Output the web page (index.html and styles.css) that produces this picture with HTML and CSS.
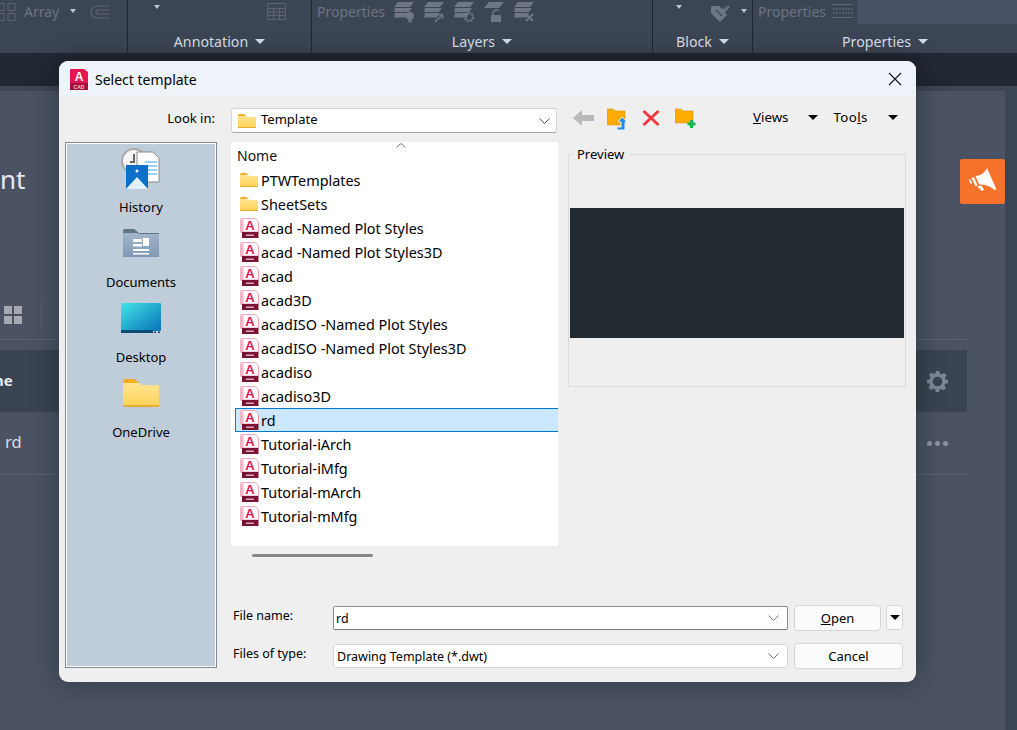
FILE: index.html
```html
<!DOCTYPE html>
<html lang="en">
<head>
<meta charset="utf-8">
<title>Select template</title>
<link rel="stylesheet" href="styles.css">
</head>
<body>
<svg class="defs" width="0" height="0" aria-hidden="true">
  <defs>
    <linearGradient id="fold" x1="0" y1="0" x2="0" y2="1"><stop offset="0" stop-color="#ffe48f"/><stop offset="1" stop-color="#ffd257"/></linearGradient>
    <linearGradient id="teal" x1="0" y1="0" x2="1" y2="1"><stop offset="0" stop-color="#45e3e6"/><stop offset="1" stop-color="#0572b8"/></linearGradient>
    <linearGradient id="docf" x1="0" y1="0" x2="0" y2="1"><stop offset="0" stop-color="#a3b7cb"/><stop offset="1" stop-color="#7f98b4"/></linearGradient>
    <symbol id="folder" viewBox="0 0 18 14">
      <path d="M0 1.500Q0 0 1.500 0H6L8 2H0Z" fill="#f2b01e"/>
      <path d="M0 2H8L9.500 3H18V13Q18 14 17 14H1Q0 14 0 13Z" fill="url(#fold)"/>
      <path d="M0 13H18V13.400Q18 14 17 14H1Q0 14 0 13.400Z" fill="#e7ac2f"/>
    </symbol>
    <symbol id="dwt" viewBox="0 0 20 20">
      <path d="M0.500 1.500Q0.500 0.500 1.500 0.500H15L18.500 4V14H0.500Z" fill="#fff" stroke="#f0a3ba"/>
      <path d="M0.500 1.500H3.500V15H0.500Z" fill="#f7b8cb"/>
      <text x="10" y="12" class="dwt-a">A</text>
      <rect x="2" y="14" width="16.500" height="6" fill="#7c1234"/>
      <rect x="6" y="16.500" width="8" height="1.500" fill="#d9a8b8"/>
    </symbol>
    <symbol id="layer" viewBox="0 0 22 22">
      <path d="M5 1H21L17 6H1ZM2 7H19L16 11H1ZM2 12H16L14 16.500H1Z" fill="#6f7784"/>
    </symbol>
  </defs>
</svg>

<div class="app">
  <header class="ribbon">
    <section class="rpanel rp0">
      <div class="rtop">
        <svg class="ic-array" width="17" height="18" viewBox="0 0 17 18"><path d="M-4 .5h8v7h-8zM8 .5h7v7H8zM-4 10.500h8v7h-8zM8 10.500h7v7H8z" fill="none" stroke="#5d6573"/></svg>
        <span class="dim">Array</span>
        <i class="tri tri-dim"></i>
        <svg class="ic-off" width="21" height="14" viewBox="0 0 21 14"><path d="M20 1H7A6 6 0 0 0 7 13H20M20 5H8A2 2 0 0 0 8 9H20" fill="none" stroke="#5d6573" stroke-width="1.200"/></svg>
      </div>
      <div class="rlabel"></div>
    </section>
    <section class="rpanel rp1">
      <div class="rtop">
        <i class="tri tri-dim tri-a"></i>
        <svg class="ic-table" width="19" height="17" viewBox="0 0 19 17"><path d="M.5.500h18v16H.5zM.5 5.500h18M.5 9h18M.5 12.500h18M6.500 5.500v11M12.500 5.500v11" fill="#3e4756" stroke="#5d6573"/></svg>
      </div>
      <div class="rlabel">Annotation <i class="tri"></i></div>
    </section>
    <section class="rpanel rp2">
      <div class="rtop">
        <span class="dim">Properties</span>
        <span class="layers">
          <svg width="22" height="22"><use href="#layer"/><circle cx="17" cy="15" r="4" fill="#6f7784"/><rect x="15.500" y="19" width="3" height="2.500" fill="#6f7784"/></svg>
          <svg width="22" height="22"><use href="#layer"/><path d="M12 21l7-7M15 13.500h4.500v4.500" stroke="#6f7784" stroke-width="1.500" fill="none"/></svg>
          <svg width="22" height="22"><use href="#layer"/><circle cx="16" cy="16" r="4" fill="none" stroke="#6f7784" stroke-width="2.500" stroke-dasharray="2 1"/></svg>
          <svg width="22" height="22"><path d="M6 1H21L16 7H1Z" fill="#6f7784"/><rect x="8" y="14" width="10" height="7" fill="#6f7784"/><path d="M10 14V11Q13 7 16 10" fill="none" stroke="#6f7784" stroke-width="1.500"/></svg>
          <svg width="22" height="22"><use href="#layer"/><path d="M13 13l7 7M20 13l-7 7" stroke="#6f7784" stroke-width="2"/></svg>
        </span>
      </div>
      <div class="rlabel">Layers <i class="tri"></i></div>
    </section>
    <section class="rpanel rp3">
      <div class="rtop">
        <i class="tri tri-dim tri-b"></i>
        <svg class="ic-tag" width="21" height="21" viewBox="0 0 21 21"><path d="M0 4H8L11 7 16 3 19 5 14 10 16 13 9 20 0 11Z" fill="#6f7784"/><path d="M5 8l6 6M13 7l6-6" stroke="#3d4655" stroke-width="1.200"/></svg>
        <i class="tri tri-dim tri-c"></i>
      </div>
      <div class="rlabel">Block <i class="tri"></i></div>
    </section>
    <section class="rpanel rp4">
      <div class="rtop">
        <span class="dim">Properties</span>
        <svg class="ic-lines" width="20" height="16" viewBox="0 0 20 16"><path d="M0 1.500h20M0 6h20M0 10h20M0 14.500h20" stroke="#6f7784" stroke-dasharray="2 1"/></svg>
        <span class="rinput"></span>
      </div>
      <div class="rlabel">Properties <i class="tri"></i></div>
    </section>
  </header>
  <div class="strip"></div>

  <main class="work">
    <div class="panel">
      <h1 class="ptitle">nt</h1>
      <div class="ptools">
        <span class="tiles"><i></i><i></i><i></i><i></i></span>
        <span class="vsep"></span>
      </div>
      <div class="thead">
        <b>ne</b>
        <svg class="gear" width="21" height="21" viewBox="0 0 24 24"><path fill="#7d8894" fill-rule="evenodd" d="M10 0h4l.6 3.200 2.200.9 2.700-1.800 2.800 2.800-1.800 2.700.9 2.200L24 10v4l-3.200.6-.9 2.200 1.800 2.700-2.800 2.800-2.700-1.800-2.200.9L14 24h-4l-.6-3.200-2.200-.9-2.700 1.800-2.800-2.800 1.800-2.700-.9-2.200L0 14v-4l3.200-.6.9-2.200-1.800-2.700 2.800-2.800 2.700 1.800 2.200-.9zM12 6.500a5.500 5.500 0 1 0 0 11 5.500 5.500 0 0 0 0-11z"/></svg>
      </div>
      <div class="trow">
        <span>rd</span>
        <span class="dots"><i></i><i></i><i></i></span>
      </div>
    </div>
    <button class="promo" type="button" aria-label="Announcements">
      <svg width="32" height="27" viewBox="0 0 32 27"><path d="M20 0 L29.500 21.500 L27.500 22 Q21 16 12 16.500L8.500 8Q17 7 20 0ZM7 9 L10.500 17.500 L8.500 18.200 L4.500 10ZM2 11.500L3.500 11 5 15.500 3.500 16ZM10 18.500L14.500 17.500 17 21.500 15 23Z" fill="#fff"/></svg>
    </button>
  </main>

  <section class="dialog" aria-label="Select template">
    <div class="dtitle">
      <svg class="logo" width="19" height="21" viewBox="0 0 19 21"><path d="M1 1Q1 0 2 0H15L19 3V15H1Z" fill="#e5154f"/><rect x="1" y="14" width="18" height="7" fill="#a2113c"/><text x="10" y="12" class="logo-a">A</text><text x="10" y="19.500" class="logo-c">CAD</text></svg>
      <span class="dname">Select template</span>
      <svg class="close" width="14" height="14" viewBox="0 0 14 14"><path d="M1 1l12 12M13 1L1 13" stroke="#111" stroke-width="1.100" fill="none"/></svg>
    </div>
    <div class="dbody">
      <div class="lookrow">
        <label class="looklabel">Look in:</label>
        <div class="combo lookcombo">
          <svg width="18" height="14"><use href="#folder"/></svg>
          <span class="looktext">Template</span>
          <svg class="chev" width="11" height="6" viewBox="0 0 11 6"><path d="M.5.500l5 5 5-5" fill="none" stroke="#555"/></svg>
        </div>
        <div class="tbicons">
          <svg width="22" height="16" viewBox="0 0 22 16"><path d="M0 8L9 0V5H21V11H9V16Z" fill="#b9b9b9"/></svg>
          <svg class="ti-up" width="22" height="22" viewBox="0 0 22 22"><path d="M0 1H6L8 3H18V17H0Z" fill="#ffab00" stroke="#d9950b" stroke-width=".6"/><path d="M15 9L20 14H18V22H10V19H14V14H11Z" fill="#1e90e8" stroke="#efefef"/></svg>
          <svg class="ti-x" width="18" height="16" viewBox="0 0 18 16"><path d="M1.500 1L16.500 15M16.500 1L1.500 15" stroke="#f4363f" stroke-width="2.800"/></svg>
          <svg class="ti-new" width="22" height="20" viewBox="0 0 22 20"><path d="M0 1H6L8 3H18V15H0Z" fill="#ffab00" stroke="#d9950b" stroke-width=".6"/><path d="M15 12H18V14.500H20.500V17.500H18V20H15V17.500H12.500V14.500H15Z" fill="#1fb151"/></svg>
        </div>
        <span class="menu menu-views"><u>V</u>iews</span><i class="tri tri-k"></i>
        <span class="menu menu-tools">Too<u>l</u>s</span><i class="tri tri-k"></i>
      </div>

      <div class="mainrow">
        <nav class="places">
          <a class="place">
            <span class="pic">
              <svg width="40" height="41" viewBox="0 0 40 41">
                <circle cx="13" cy="13" r="12" fill="#f4f4f4" stroke="#a8a8a8" stroke-width="2"/>
                <path d="M13 6v8h-4" fill="none" stroke="#666" stroke-width="2"/>
                <path d="M16 4H32L38 10V34H16Z" fill="#fff" stroke="#8a8a8a"/>
                <path d="M24 14H36M24 18H36M26 22H36M26 26H36" stroke="#2ea7e6"/>
                <path d="M5 17H27V41H5Z" fill="#0a70c9"/>
                <path d="M5 41L16 29 27 41Z" fill="#e5f1fa"/>
                <circle cx="16" cy="23" r="1.500" fill="#fff"/>
              </svg>
            </span>
            <span>History</span>
          </a>
          <a class="place">
            <span class="pic">
              <svg width="36" height="28" viewBox="0 0 36 28">
                <path d="M0 2Q0 0 2 0H11L16 4H36V28H0Z" fill="#5f7586"/>
                <path d="M0 4H14L17 5H36V27Q36 28 35 28H1Q0 28 0 27Z" fill="url(#docf)"/>
                <path d="M10 10H19V13H10ZM10 15H19V17.500H10ZM10 20H26V22H10ZM10 24H26V25.500H10Z" fill="#fff"/>
                <rect x="20" y="9" width="6" height="8" fill="#fff"/>
              </svg>
            </span>
            <span>Documents</span>
          </a>
          <a class="place">
            <span class="pic">
              <svg width="40" height="30" viewBox="0 0 40 30">
                <rect width="40" height="28" rx="1" fill="url(#teal)"/>
                <rect y="27" width="32" height="3" fill="#0b4a72"/>
                <path d="M33 28.500h2v1.500h-2zM37 28.500h2v1.500h-2z" fill="#0b4a72"/>
              </svg>
            </span>
            <span>Desktop</span>
          </a>
          <a class="place">
            <span class="pic">
              <svg width="36" height="28"><use href="#folder"/></svg>
            </span>
            <span>OneDrive</span>
          </a>
        </nav>

        <div class="center">
          <div class="upper">
            <div class="listcol">
              <div class="list">
                <div class="lhead">Nome
                  <svg class="caret" width="10" height="5" viewBox="0 0 10 5"><path d="M.5 4.500L5 .5l4.500 4" fill="none" stroke="#777"/></svg>
                </div>
                <div class="row"><svg width="18" height="14"><use href="#folder"/></svg><span>PTWTemplates</span></div>
                <div class="row"><svg width="18" height="14"><use href="#folder"/></svg><span>SheetSets</span></div>
                <div class="row"><svg width="20" height="20"><use href="#dwt"/></svg><span>acad -Named Plot Styles</span></div>
                <div class="row"><svg width="20" height="20"><use href="#dwt"/></svg><span>acad -Named Plot Styles3D</span></div>
                <div class="row"><svg width="20" height="20"><use href="#dwt"/></svg><span>acad</span></div>
                <div class="row"><svg width="20" height="20"><use href="#dwt"/></svg><span>acad3D</span></div>
                <div class="row"><svg width="20" height="20"><use href="#dwt"/></svg><span>acadISO -Named Plot Styles</span></div>
                <div class="row"><svg width="20" height="20"><use href="#dwt"/></svg><span>acadISO -Named Plot Styles3D</span></div>
                <div class="row"><svg width="20" height="20"><use href="#dwt"/></svg><span>acadiso</span></div>
                <div class="row"><svg width="20" height="20"><use href="#dwt"/></svg><span>acadiso3D</span></div>
                <div class="row sel"><svg width="20" height="20"><use href="#dwt"/></svg><span>rd</span></div>
                <div class="row"><svg width="20" height="20"><use href="#dwt"/></svg><span>Tutorial-iArch</span></div>
                <div class="row"><svg width="20" height="20"><use href="#dwt"/></svg><span>Tutorial-iMfg</span></div>
                <div class="row"><svg width="20" height="20"><use href="#dwt"/></svg><span>Tutorial-mArch</span></div>
                <div class="row"><svg width="20" height="20"><use href="#dwt"/></svg><span>Tutorial-mMfg</span></div>
              </div>
              <div class="hscroll"></div>
            </div>
            <fieldset class="preview">
              <legend>Preview</legend>
              <div class="pvimg"></div>
            </fieldset>
          </div>
          <div class="fields">
            <label>File name:</label>
            <div class="combo input active"><span>rd</span><svg class="chev" width="11" height="6" viewBox="0 0 11 6"><path d="M.5.500l5 5 5-5" fill="none" stroke="#777"/></svg></div>
            <div class="btnpair">
              <button class="btn open" type="button"><u>O</u>pen</button>
              <button class="btn drop" type="button"><i class="tri tri-k"></i></button>
            </div>
            <label>Files of type:</label>
            <div class="combo input"><span>Drawing Template (*.dwt)</span><svg class="chev" width="11" height="6" viewBox="0 0 11 6"><path d="M.5.500l5 5 5-5" fill="none" stroke="#777"/></svg></div>
            <button class="btn" type="button">Cancel</button>
          </div>
        </div>
      </div>
    </div>
  </section>
</div>
</body>
</html>
```
FILE: styles.css
```css
* { box-sizing: border-box; }
html, body { margin: 0; height: 100%; }
body { font-family: "Noto Sans", "Open Sans", sans-serif; background: #3c4554; overflow: hidden; }
.defs { position: absolute; }
i { display: inline-block; font-style: normal; }

.app { position: relative; width: 1017px; height: 730px; display: flex; flex-direction: column; overflow: hidden; }

/* ribbon */
.ribbon { display: flex; height: 53px; background: #3c4554; flex: none; }
.rpanel { display: flex; flex-direction: column; border-left: 1px solid #20262f; height: 52px; }
.rp0 { width: 127px; border-left: 0; }
.rp1 { width: 184px; }
.rp2 { width: 341px; }
.rp3 { width: 100px; }
.rp4 { width: 265px; }
.rtop { height: 31px; display: flex; align-items: flex-start; }
.rlabel { flex: 1; display: flex; align-items: center; justify-content: center; gap: 7px; color: #d8dfe8; font-size: 14.200px; }
.dim { color: #6c7482; font-size: 14px; line-height: 23px; }
.tri { width: 0; height: 0; border-left: 5px solid transparent; border-right: 5px solid transparent; border-top: 5px solid #d5dbe3; flex: none; }
.tri-dim { border-left-width: 3.500px; border-right-width: 3.500px; border-top-width: 4px; border-top-color: #c0c6cf; }
.tri-k { border-left-width: 5px; border-right-width: 5px; border-top: 5px solid #000; }
.ic-array { margin: 3px 7px 0 0; }
.rp0 .tri { margin: 9px 0 0 11px; }
.ic-off { margin: 5px 0 0 14px; }
.rp1 .tri-a { margin: 5px 0 0 26px; }
.ic-table { margin: 3px 0 0 107px; }
.rp2 .dim { margin-left: 5px; }
.layers { display: flex; gap: 8px; margin: 0 0 0 8px; padding-top: 1px; }
.rp3 .tri-b { margin: 5px 0 0 23px; }
.ic-tag { margin: 2px 0 0 29px; }
.rp3 .tri-c { margin: 9px 0 0 9px; }
.rp4 .dim { margin-left: 5px; }
.ic-lines { margin: 3px 0 0 7px; }
.rinput { flex: 1; height: 24px; margin-left: 4px; background: #495366; }

.strip { height: 33px; background: #212832; flex: none; }

/* workspace */
.work { flex: 1; display: flex; align-items: flex-start; padding: 5px 12px 0 0; position: relative; }
.panel { flex: 1; height: 100%; background: #4a5263; padding-right: 38px; }
.ptitle { margin: 0; height: 209px; padding-top: 70px; font-size: 26px; line-height: 36px; font-weight: 400; color: #e6e9ee; }
.ptools { display: flex; align-items: center; height: 40px; border-bottom: 1px solid #5a6272; padding: 0 0 9px 4px; }
.tiles { display: grid; grid-template-columns: 8px 8px; gap: 2px; }
.tiles i { width: 8px; height: 8px; background: #a5a9b2; }
.vsep { width: 1px; height: 30px; background: #576072; margin-left: 19px; }
.thead { margin-top: 10px; height: 62px; background: #3a4351; display: flex; align-items: center; justify-content: space-between; padding: 0 19px 2px 0; color: #e9ecf0; font-size: 15px; }
.thead b { margin-left: -6px; }
.gear { display: block; margin-top: 2px; }
.trow { height: 63px; border-bottom: 1px solid #5a6272; display: flex; align-items: center; justify-content: space-between; padding: 0 19px 4px 5px; color: #d9dde3; font-size: 16.500px; }
.dots { display: flex; gap: 3px; margin-top: 5px; }
.dots i { width: 5px; height: 5px; border-radius: 50%; background: #8a95a1; }
.promo { position: absolute; left: 960px; top: 73px; width: 45px; height: 45px; padding: 0; border: 0; border-radius: 2px; background: #f6722a; display: flex; align-items: center; justify-content: center; }

/* dialog window */
.dialog { position: absolute; left: 59px; top: 61px; width: 857px; height: 621px; border-radius: 9px; background: #efefef; box-shadow: 0 0 28px rgba(0,0,0,.35); display: flex; flex-direction: column; overflow: hidden; color: #000; font-size: 13px; }
.dtitle { height: 36px; background: #eef3f9; display: flex; align-items: center; padding: 0 14px 0 10px; flex: none; }
.logo { display: block; }
.logo-a { font: 700 12px "Liberation Sans", sans-serif; fill: #fff; text-anchor: middle; }
.logo-c { font: 700 5px "Liberation Sans", sans-serif; fill: #f3c7d3; text-anchor: middle; }
.dwt-a { font: 700 13px "Liberation Sans", sans-serif; fill: #e5154f; text-anchor: middle; }
.dname { margin-left: 7px; font-size: 14px; flex: 1; }
.dbody { flex: 1; display: flex; flex-direction: column; padding: 0 13px 13px 6px; }

.lookrow { display: flex; align-items: flex-start; height: 45px; padding-top: 11px; flex: none; }
.looklabel { width: 166px; text-align: right; padding-right: 16px; line-height: 21px; }
.combo { display: flex; align-items: center; background: #fff; border: 1px solid #d5d5d5; border-radius: 3px; }
.lookcombo { width: 326px; height: 25px; padding: 0 6px; gap: 5px; border-bottom-color: #a8a8a8; }
.looktext { padding-bottom: 3px; }
.chev { margin-left: auto; flex: none; }
.tbicons { display: flex; align-items: flex-start; margin-left: 16px; width: 180px; }
.tbicons svg { flex: none; }
.tbicons > :first-child { margin-top: 2px; }
.ti-up { margin-left: 12px; }
.ti-x { margin: 2px 0 0 13px; }
.ti-new { margin-left: 15px; }
.menu { line-height: 19px; font-size: 13.300px; }
.menu-views { margin-left: 0; }
.menu + .tri { margin: 7px 0 0 20px; }
.menu-tools { margin-left: 15px; letter-spacing: .4px; }

.mainrow { flex: 1; display: flex; gap: 14px; min-height: 0; }
.places { width: 152px; margin-bottom: 1px; background: #bfccd9; border: 1px solid #7f8a94; box-shadow: inset 0 0 0 1px #fff; padding-top: 2px; text-align: center; flex: none; }
.place { height: 75px; display: flex; flex-direction: column; align-items: center; color: #000; }
.pic { height: 46px; display: flex; align-items: center; justify-content: center; margin-bottom: 6px; }
.place > span:last-child { line-height: 20px; }

.center { flex: 1; display: flex; flex-direction: column; min-width: 0; }
.upper { display: flex; gap: 10px; height: 463px; flex: none; }
.listcol { width: 327px; flex: none; display: flex; flex-direction: column; }
.list { height: 404px; background: #fff; position: relative; overflow: hidden; }
.lhead { height: 26px; padding-left: 6px; font-size: 14px; line-height: 27px; color: #111; }
.caret { position: absolute; left: 165px; top: 1px; }
.row { height: 24px; display: flex; align-items: center; gap: 1px; padding-left: 5px; margin-left: 4px; font-size: 14.400px; color: #000; white-space: nowrap; }
.row svg { flex: none; }
.row svg[height="14"] { margin-right: 2px; }
.row.sel { background: #cce8ff; border: 1px solid #0078d7; border-right: 0; padding-left: 4px; border-radius: 1px 0 0 1px; }
.hscroll { width: 121px; height: 3px; margin: 8px 0 0 21px; background: #888; border-radius: 2px; }

.preview { flex: none; margin: 3px 0 0; padding: 0 1px; width: 338px; height: 242px; border: 1px solid #dcdcdc; min-width: 0; }
.preview legend { margin-left: 2px; padding: 0 4px 0 5px; font-size: 13px; line-height: 18px; }
.pvimg { height: 130px; margin-top: 45px; background: #212931; }

.fields { display: grid; grid-template-columns: 102px 461px 109px; row-gap: 12px; column-gap: 0; align-items: center; }
.fields label { padding: 0 0 5px 2px; font-size: 12.500px; }
.input { height: 24px; padding: 0 8px 0 3px; margin-right: 6px; font-size: 12.500px; }
.input.active { border-color: #8e8e8e; border-bottom-color: #777; border-radius: 2px; padding-left: 2px; }
.btnpair { display: flex; gap: 5px; }
.btn { height: 26px; width: 109px; background: #fbfbfb; border: 1px solid #d5d5d5; border-radius: 4px; font: 13px "Noto Sans", sans-serif; color: #000; padding: 0; }
.btn.open { width: 87px; }
.btn.drop { width: 17px; height: 25px; display: flex; align-items: center; justify-content: center; }
```
